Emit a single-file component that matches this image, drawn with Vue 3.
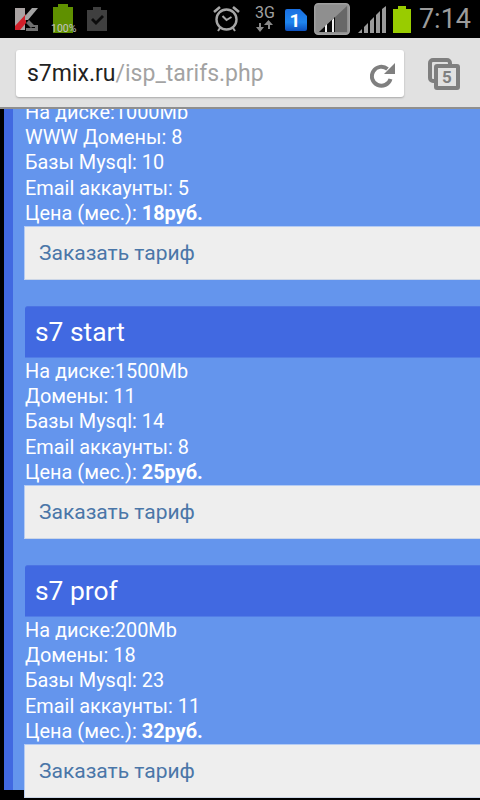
<template>
  <div class="phone">
    <div class="status-bar">
      <div class="status-left">
        <svg class="ic-kav" width="24" height="24" viewBox="0 0 24 24">
          <path d="M0 1h10v22H0z" fill="#a9a3a3" />
          <path d="M0 23v-4L11 7v9l-6 7z" fill="#d2202a" />
          <path d="M10 9l7-8h6l-10 12h-3z" fill="#a3a3a3" />
          <path d="M11 16l3-3 5 5h4v6H11v-3h9v-1h-3l-1 1z" fill="#6f6f6f" />
        </svg>
        <div class="battery-small">
          <span class="battery-small-cap"></span>
          <span class="battery-small-body"></span>
          <span class="battery-small-text">100%</span>
        </div>
        <svg class="ic-clip" width="20" height="24" viewBox="0 0 20 24">
          <path d="M0 3h6V0h8v3h6v21H0z" fill="#3f3f3f" />
          <path d="M4 13l2-2 3 3 6-6 2 2-8 8z" fill="#0c0c0c" />
        </svg>
      </div>
      <div class="status-right">
        <svg class="ic-alarm" width="27" height="26" viewBox="0 0 27 26" fill="none" stroke="#a6a6a6">
          <circle cx="13.5" cy="13.5" r="10" stroke-width="2.4" />
          <path d="M9.5 10l4 4 5-3" stroke-width="2" />
          <path d="M1 6l6-5M26 6l-6-5" stroke-width="2.6" />
          <path d="M7 22l-2 3M20 22l2 3" stroke-width="2" />
        </svg>
        <div class="net">
          <span class="net-label">3G</span>
          <svg width="17" height="12" viewBox="0 0 17 12">
            <path d="M4 12L0 7h3V3h2v4h3zM12.500 0L17 5h-3v4h-2V5H8z" fill="#8a8a8a" />
          </svg>
        </div>
        <svg class="ic-sim" width="22" height="22" viewBox="0 0 22 22">
          <defs>
            <linearGradient id="simFill" x1="0" y1="0" x2="0" y2="1">
              <stop offset="0" stop-color="#1a6fe0" />
              <stop offset="0.6" stop-color="#1f86f0" />
              <stop offset="1" stop-color="#0c4fbd" />
            </linearGradient>
          </defs>
          <path d="M2 0h13l7 7v13a2 2 0 0 1-2 2H2a2 2 0 0 1-2-2V2a2 2 0 0 1 2-2z" fill="url(#simFill)" />
          <text x="10" y="18" class="sim-num">1</text>
        </svg>
        <svg class="ic-signal-box" width="36" height="32" viewBox="0 0 36 32">
          <rect x="0.75" y="0.75" width="34.500" height="30.500" rx="3.500" fill="#8f8f8f" stroke="#a0a0a0" stroke-width="1.500" />
          <path d="M5 29L33 3v26z" fill="#686868" />
          <path d="M5 29L21 14v15z" fill="#0a0a0a" />
          <path d="M11 29v-6l2-2v8zM18 29V17l2-2v14z" fill="#f1f1f1" />
        </svg>
        <svg class="ic-bars" width="28" height="27" viewBox="0 0 28 27">
          <path d="M0 27l4-4v4zM6 27v-6l4-4v10zM12 27V15l4-4v16zM18 27V9l4-4v22zM24 27V3l4-3v27z" fill="#9a9a9a" />
        </svg>
        <div class="battery">
          <span class="battery-cap"></span>
          <span class="battery-body"></span>
        </div>
        <span class="clock">7:14</span>
      </div>
    </div>

    <div class="toolbar">
      <div class="url-box">
        <span class="url"><span class="host">s7mix.ru</span><span class="path">/isp_tarifs.php</span></span>
        <svg class="ic-reload" width="26" height="26" viewBox="0 0 26 26" fill="none">
          <path d="M17.500 7A9.500 9.500 0 1 0 20.500 17" stroke="#7f7f7f" stroke-width="4" />
          <path d="M25 1v11H14z" fill="#7f7f7f" />
        </svg>
      </div>
      <div class="tabs">
        <span class="tabs-back"></span>
        <span class="tabs-front">5</span>
      </div>
    </div>

    <div class="page">
      <div class="content">
        <div v-for="plan in plans" :key="plan.disk" class="plan">
          <h2 v-if="plan.name" class="plan-title">{{ plan.name }}</h2>
          <div class="plan-lines">
            <div class="plan-line">На диске:{{ plan.disk }}</div>
            <div class="plan-line">{{ plan.domainsLabel }}: {{ plan.domains }}</div>
            <div class="plan-line">Базы Mysql: {{ plan.bases }}</div>
            <div class="plan-line">Email аккаунты: {{ plan.emails }}</div>
            <div class="plan-line">Цена (мес.): <b>{{ plan.price }}</b></div>
          </div>
          <a class="order-btn">Заказать тариф</a>
        </div>
      </div>
    </div>
  </div>
</template>

<script setup>
const plans = [
  { name: '', disk: '1000Mb', domainsLabel: 'WWW Домены', domains: 8, bases: 10, emails: 5, price: '18руб.' },
  { name: 's7 start', disk: '1500Mb', domainsLabel: 'Домены', domains: 11, bases: 14, emails: 8, price: '25руб.' },
  { name: 's7 prof', disk: '200Mb', domainsLabel: 'Домены', domains: 18, bases: 23, emails: 11, price: '32руб.' }
];
</script>

<style>
body {
  background: #000;
}
</style>

<style scoped>
.phone {
  width: 480px;
  height: 800px;
  overflow: hidden;
  display: flex;
  flex-direction: column;
  font-family: Roboto, "Noto Sans", sans-serif;
}

.status-bar {
  height: 38px;
  flex: none;
  background: #000;
  display: flex;
  justify-content: space-between;
  align-items: center;
}

.status-left {
  display: flex;
  align-items: center;
  padding-left: 15px;
  gap: 14px;
}

.status-right {
  display: flex;
  align-items: center;
  padding-right: 9px;
}

.battery-small {
  position: relative;
  width: 20px;
  height: 30px;
  display: flex;
  flex-direction: column;
  align-items: center;
}

.battery-small-cap {
  width: 10px;
  height: 3px;
  background: #5f9000;
}

.battery-small-body {
  width: 20px;
  height: 26px;
  background: #5f9000;
}

.battery-small-text {
  position: absolute;
  top: 19px;
  left: -2px;
  font-size: 10.5px;
  line-height: 12px;
  color: #c4c4c4;
}

.ic-alarm {
  margin-right: 15px;
}

.net {
  width: 20px;
  display: flex;
  flex-direction: column;
  align-items: center;
  margin-right: 10px;
}

.net-label {
  font-size: 16px;
  line-height: 14px;
  color: #a0a0a0;
}

.ic-sim {
  margin: 2px 7px 0 0;
}

.ic-signal-box {
  margin-right: 8px;
}

.ic-bars {
  margin-right: 7px;
}

.battery {
  width: 18px;
  display: flex;
  flex-direction: column;
  align-items: center;
  margin-right: 8px;
}

.battery-cap {
  width: 8px;
  height: 3px;
  background: #99cc00;
}

.battery-body {
  width: 18px;
  height: 24px;
  background: #99cc00;
}

.clock {
  font-size: 27px;
  color: #9c9c9c;
}

.sim-num {
  font-size: 19px;
  font-weight: 700;
  fill: #fff;
  text-anchor: middle;
  font-family: Roboto, sans-serif;
}

.toolbar {
  height: 71px;
  flex: none;
  box-sizing: border-box;
  background: #e1e1e1;
  border-bottom: 2px solid #8f8f8f;
  display: flex;
  align-items: center;
  padding: 2px 20px 0 16px;
  gap: 24px;
}

.url-box {
  flex: 1;
  height: 47px;
  background: #fff;
  border-radius: 3px;
  box-shadow: 0 1px 2px rgba(0, 0, 0, 0.25);
  display: flex;
  align-items: center;
  justify-content: space-between;
  padding: 0 8px 0 11px;
}

.url {
  font-size: 23px;
  white-space: nowrap;
}

.host {
  color: #222;
}

.path {
  color: #a3a3a3;
}

.ic-reload {
  margin-top: 2px;
}

.tabs {
  position: relative;
  width: 32px;
  height: 32px;
}

.tabs-back {
  position: absolute;
  left: 0;
  top: 0;
  width: 24px;
  height: 25px;
  box-sizing: border-box;
  border: 4px solid #7f7f7f;
  border-radius: 5px;
}

.tabs-front {
  position: absolute;
  left: 6px;
  top: 6px;
  width: 26px;
  height: 26px;
  box-sizing: border-box;
  border: 4px solid #7f7f7f;
  border-radius: 3px;
  background: #e1e1e1;
  color: #7f7f7f;
  font-size: 17px;
  font-weight: 700;
  display: flex;
  align-items: center;
  justify-content: center;
}

.page {
  flex: 1;
  min-height: 0;
  background: #000;
  padding-left: 4px;
  overflow: hidden;
}

.content {
  height: 100%;
  background: #6495ed;
  border-left: 9px solid #4169e1;
  padding-left: 12px;
}

.plan {
  margin-bottom: 26px;
}

.plan:first-child {
  margin-top: -10px;
}

.plan-title {
  margin: 0;
  height: 52px;
  box-sizing: border-box;
  background: #4169e1;
  border-top: 1px solid #4c74e3;
  border-bottom: 1px solid #527de6;
  border-radius: 3px 0 0 0;
  color: #fff;
  font-size: 26.4px;
  font-weight: 400;
  line-height: 50px;
  padding-left: 10px;
}

.plan-lines {
  padding-top: 1px;
}

.plan-line {
  font-size: 19.9px;
  line-height: 25.2px;
  color: #fff;
}

.plan-line b {
  font-weight: 700;
}

.order-btn {
  display: block;
  box-sizing: border-box;
  height: 54px;
  margin-left: -1px;
  background: #eeeeee;
  border: 1px solid #b4cbf3;
  border-bottom-color: #ccd6e6;
  border-right: 0;
  color: #4a76a8;
  font-size: 21px;
  line-height: 52px;
  padding-left: 14px;
}
</style>
